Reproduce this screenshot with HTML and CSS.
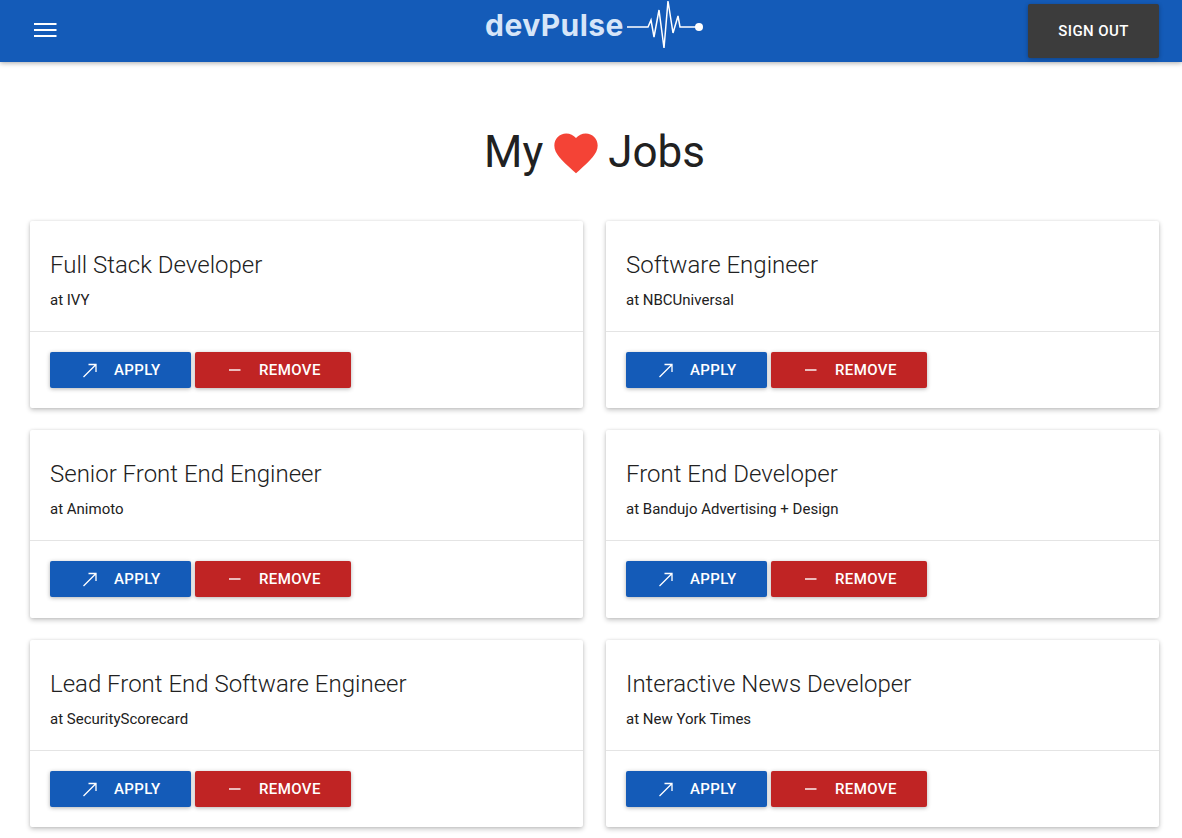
FILE: index.html
```html
<!DOCTYPE html>
<html lang="en">
<head>
<meta charset="utf-8">
<title>devPulse - My Jobs</title>
<link rel="stylesheet" href="styles.css">
</head>
<body>
<header class="appbar">
  <div class="appbar-left">
    <svg class="menu-icon" viewBox="0 0 24 24" width="24" height="24"><path d="M1 5h22.500M1 11h22.500M1 17h22.500" fill="none" stroke="#fff" stroke-width="2.200"/></svg>
  </div>
  <div class="logo">
    <span class="logo-text">devPulse</span>
    <svg class="logo-pulse" viewBox="0 0 77 52" width="77" height="52"><path d="M0 27H21L24 20L27 37L32 10L37 48L41 1L46 33L51 16L53 27H69" fill="none" stroke="#fff" stroke-width="1.500"/><circle cx="72" cy="27" r="4" fill="#fff"/></svg>
  </div>
  <div class="appbar-right">
    <button class="btn btn-dark">SIGN OUT</button>
  </div>
</header>
<main>
  <h1 class="page-title">My <svg class="heart" viewBox="0 0 24 24" width="52" height="52"><path d="M12 21.350l-1.450-1.320C5.400 15.360 2 12.280 2 8.500 2 5.420 4.420 3 7.500 3c1.740 0 3.410.81 4.500 2.090C13.090 3.810 14.760 3 16.500 3 19.580 3 22 5.420 22 8.500c0 3.780-3.400 6.860-8.550 11.540L12 21.350z" fill="#f44336"/></svg> Jobs</h1>
  <section class="job-grid">
    <article class="card">
      <div class="card-head"><h2>Full Stack Developer</h2><p>at IVY</p></div>
      <div class="card-actions">
        <button class="btn btn-apply"><svg class="btn-icon" viewBox="0 0 16 16" width="16" height="16"><path d="M1.500 15L14 2.500M6.500 2.500H14V10" fill="none" stroke="#fff" stroke-width="1.300"/></svg>APPLY</button>
        <button class="btn btn-remove"><svg class="btn-icon" viewBox="0 0 16 16" width="16" height="16"><path d="M2 8h11.500" fill="none" stroke="#fff" stroke-width="1.400"/></svg>REMOVE</button>
      </div>
    </article>
    <article class="card">
      <div class="card-head"><h2>Software Engineer</h2><p>at NBCUniversal</p></div>
      <div class="card-actions">
        <button class="btn btn-apply"><svg class="btn-icon" viewBox="0 0 16 16" width="16" height="16"><path d="M1.500 15L14 2.500M6.500 2.500H14V10" fill="none" stroke="#fff" stroke-width="1.300"/></svg>APPLY</button>
        <button class="btn btn-remove"><svg class="btn-icon" viewBox="0 0 16 16" width="16" height="16"><path d="M2 8h11.500" fill="none" stroke="#fff" stroke-width="1.400"/></svg>REMOVE</button>
      </div>
    </article>
    <article class="card">
      <div class="card-head"><h2>Senior Front End Engineer</h2><p>at Animoto</p></div>
      <div class="card-actions">
        <button class="btn btn-apply"><svg class="btn-icon" viewBox="0 0 16 16" width="16" height="16"><path d="M1.500 15L14 2.500M6.500 2.500H14V10" fill="none" stroke="#fff" stroke-width="1.300"/></svg>APPLY</button>
        <button class="btn btn-remove"><svg class="btn-icon" viewBox="0 0 16 16" width="16" height="16"><path d="M2 8h11.500" fill="none" stroke="#fff" stroke-width="1.400"/></svg>REMOVE</button>
      </div>
    </article>
    <article class="card">
      <div class="card-head"><h2>Front End Developer</h2><p>at Bandujo Advertising + Design</p></div>
      <div class="card-actions">
        <button class="btn btn-apply"><svg class="btn-icon" viewBox="0 0 16 16" width="16" height="16"><path d="M1.500 15L14 2.500M6.500 2.500H14V10" fill="none" stroke="#fff" stroke-width="1.300"/></svg>APPLY</button>
        <button class="btn btn-remove"><svg class="btn-icon" viewBox="0 0 16 16" width="16" height="16"><path d="M2 8h11.500" fill="none" stroke="#fff" stroke-width="1.400"/></svg>REMOVE</button>
      </div>
    </article>
    <article class="card">
      <div class="card-head"><h2>Lead Front End Software Engineer</h2><p>at SecurityScorecard</p></div>
      <div class="card-actions">
        <button class="btn btn-apply"><svg class="btn-icon" viewBox="0 0 16 16" width="16" height="16"><path d="M1.500 15L14 2.500M6.500 2.500H14V10" fill="none" stroke="#fff" stroke-width="1.300"/></svg>APPLY</button>
        <button class="btn btn-remove"><svg class="btn-icon" viewBox="0 0 16 16" width="16" height="16"><path d="M2 8h11.500" fill="none" stroke="#fff" stroke-width="1.400"/></svg>REMOVE</button>
      </div>
    </article>
    <article class="card">
      <div class="card-head"><h2>Interactive News Developer</h2><p>at New York Times</p></div>
      <div class="card-actions">
        <button class="btn btn-apply"><svg class="btn-icon" viewBox="0 0 16 16" width="16" height="16"><path d="M1.500 15L14 2.500M6.500 2.500H14V10" fill="none" stroke="#fff" stroke-width="1.300"/></svg>APPLY</button>
        <button class="btn btn-remove"><svg class="btn-icon" viewBox="0 0 16 16" width="16" height="16"><path d="M2 8h11.500" fill="none" stroke="#fff" stroke-width="1.400"/></svg>REMOVE</button>
      </div>
    </article>
  </section>
</main>
</body>
</html>
```
FILE: styles.css
```css
* { box-sizing: border-box; }
html, body { height: 100%; }
body {
  margin: 0;
  background: #fff;
  color: #212121;
  font-family: Roboto, "Liberation Sans", sans-serif;
  overflow: hidden;
}
.appbar {
  height: 62px;
  background: #145bb8;
  display: grid;
  grid-template-columns: 1fr auto 1fr;
  align-items: center;
  box-shadow: 0 1px 5px rgba(0,0,0,.35);
}
.appbar-left { padding-left: 33px; display: flex; align-items: center; }
.menu-icon { display: block; }
.appbar-right { display: flex; justify-content: flex-end; padding-right: 23px; }
.logo { display: flex; align-items: center; height: 62px; margin-left: 7px; }
.logo-text {
  font-family: Inter, "Open Sans", sans-serif;
  font-weight: 700;
  font-size: 30px;
  letter-spacing: .45px;
  line-height: 36px;
  color: #d6e5f8;
  margin-top: -13px;
}
.logo-pulse { margin: -10px 0 0 3px; }
.btn {
  border: 0;
  border-radius: 2px;
  color: #fff;
  font-family: Roboto, "Liberation Sans", sans-serif;
  font-weight: 500;
  font-size: 15px;
  letter-spacing: .4px;
  display: inline-flex;
  align-items: center;
  height: 36px;
  padding: 0;
  box-shadow: 0 1px 4px rgba(0,0,0,.3);
}
.btn-dark { width: 131px; height: 54px; background: #3c3c3c; justify-content: center; }
.btn-apply { width: 141px; padding-left: 32px; background: #145bb8; }
.btn-remove { width: 156px; padding-left: 32px; background: #c02424; }
.btn-icon { margin-right: 16px; }
.page-title {
  margin: 0;
  padding: 62px 0 0 7px;
  height: 159px;
  text-align: center;
  font-weight: 400;
  font-size: 44px;
  line-height: 56px;
}
.heart { vertical-align: -12px; margin: 0 -5px 0 -4px; }
.job-grid {
  display: grid;
  grid-template-columns: 553px 553px;
  column-gap: 23px;
  row-gap: 22px;
  padding-left: 30px;
}
.card {
  background: #fff;
  height: 187.400px;
  border-radius: 2px;
  box-shadow: 0 2px 5px rgba(0,0,0,.24), 0 0 3px rgba(0,0,0,.08);
}
.card-head {
  height: 111px;
  padding: 29px 20px 0;
  border-bottom: 1px solid #e4e4e4;
}
.card-head h2 {
  margin: 0;
  font-weight: 300;
  font-size: 24px;
  line-height: 30px;
}
.card-head p {
  margin: 12px 0 0;
  font-size: 15px;
  line-height: 16px;
  color: #212121;
}
.card-actions {
  display: flex;
  gap: 4px;
  padding: 20px 20px 0;
}
```
